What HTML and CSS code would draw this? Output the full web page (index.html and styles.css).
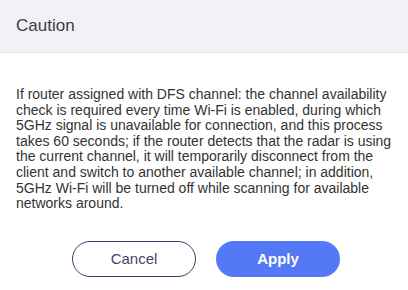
FILE: index.html
```html
<!DOCTYPE html>
<html>
<head>
<meta charset="utf-8">
<link rel="stylesheet" href="styles.css">
</head>
<body>
<div class="dialog">
  <div class="header">
    <h1 class="title">Caution</h1>
  </div>
  <div class="body">
    <p class="message">If router assigned with DFS channel: the channel availability check is required every time Wi-Fi is enabled, during which 5GHz signal is unavailable for connection, and this process takes 60 seconds; if the router detects that the radar is using the current channel, it will temporarily disconnect from the client and switch to another available channel; in addition, 5GHz Wi-Fi will be turned off while scanning for available networks around.</p>
  </div>
  <div class="footer">
    <button class="btn btn-cancel">Cancel</button>
    <button class="btn btn-apply">Apply</button>
  </div>
</div>
</body>
</html>
```
FILE: styles.css
```css
html, body {
  margin: 0;
  padding: 0;
  background: #ffffff;
}
body {
  width: 408px;
  height: 290px;
  overflow: hidden;
  font-family: "Liberation Sans", Arial, sans-serif;
}
.dialog {
  display: flex;
  flex-direction: column;
}
.header {
  height: 53px;
  background: #f2f1f6;
  border-bottom: 1px solid #e6e5ec;
  display: flex;
  align-items: center;
  padding: 0 16px;
  box-sizing: border-box;
}
.title {
  margin: 0;
  font-size: 17px;
  font-weight: normal;
  color: #3a3a4c;
}
.body {
  padding: 34px 16px 0 16px;
}
.message {
  margin: 0;
  font-size: 14px;
  line-height: 15.6px;
  color: #333333;
}
.footer {
  display: flex;
  justify-content: center;
  gap: 20px;
  padding-top: 29px;
  padding-left: 4px;
}
.btn {
  width: 124px;
  height: 36px;
  border-radius: 18px;
  font-family: "Liberation Sans", Arial, sans-serif;
  font-size: 15px;
  box-sizing: border-box;
  cursor: pointer;
}
.btn-cancel {
  background: #ffffff;
  border: 1px solid #3b3a66;
  color: #45446a;
}
.btn-apply {
  background: #5478f6;
  border: none;
  color: #ffffff;
  font-weight: bold;
}
```
